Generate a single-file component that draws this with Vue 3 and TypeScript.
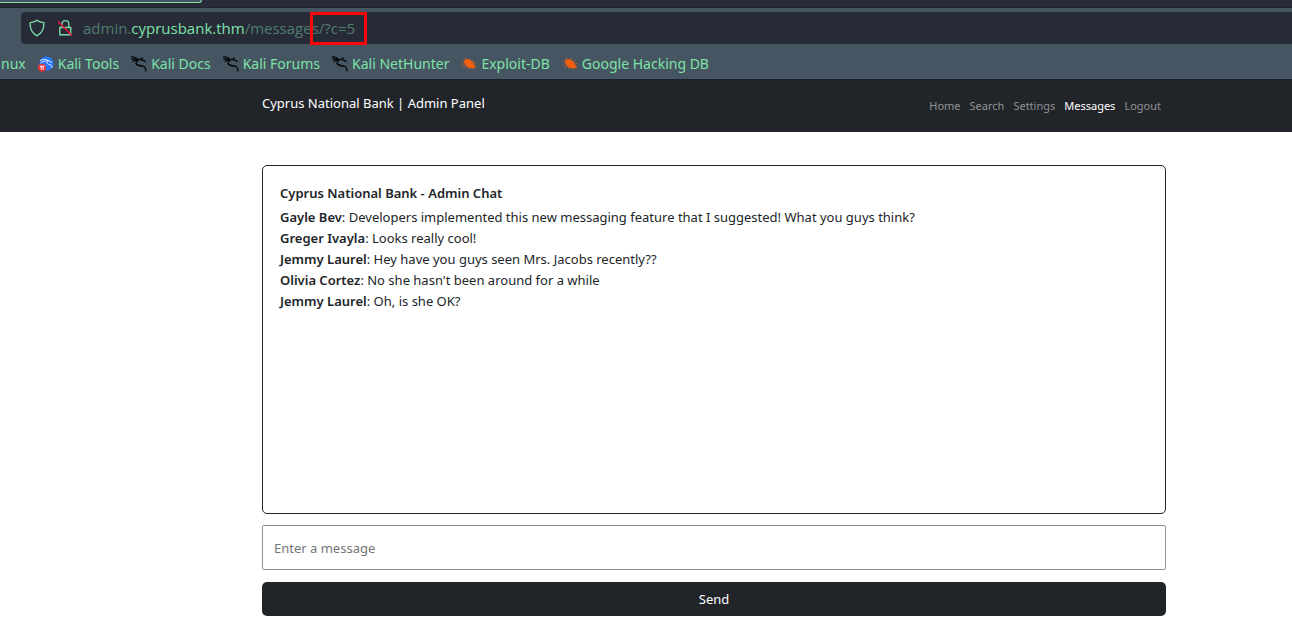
<script setup lang="ts">
import { ref } from 'vue'

interface Bookmark {
  label: string
  icon: 'tools' | 'dragon' | 'bug' | null
}
interface NavItem {
  label: string
  active?: boolean
}
interface Message {
  author: string
  text: string
}

const bookmarks: Bookmark[] = [
  { label: 'nux', icon: null },
  { label: 'Kali Tools', icon: 'tools' },
  { label: 'Kali Docs', icon: 'dragon' },
  { label: 'Kali Forums', icon: 'dragon' },
  { label: 'Kali NetHunter', icon: 'dragon' },
  { label: 'Exploit-DB', icon: 'bug' },
  { label: 'Google Hacking DB', icon: 'bug' },
]
const navItems: NavItem[] = [
  { label: 'Home' },
  { label: 'Search' },
  { label: 'Settings' },
  { label: 'Messages', active: true },
  { label: 'Logout' },
]
const messages: Message[] = [
  { author: 'Gayle Bev', text: 'Developers implemented this new messaging feature that I suggested! What you guys think?' },
  { author: 'Greger Ivayla', text: 'Looks really cool!' },
  { author: 'Jemmy Laurel', text: 'Hey have you guys seen Mrs. Jacobs recently??' },
  { author: 'Olivia Cortez', text: "No she hasn't been around for a while" },
  { author: 'Jemmy Laurel', text: 'Oh, is she OK?' },
]
const draft = ref('')
</script>

<template>
  <div class="screen">
    <div class="tabstrip"><div class="tab"></div></div>
    <div class="toolbar">
      <div class="urlbar">
        <svg class="shield" viewBox="0 0 16 18" aria-hidden="true">
          <path d="M8 1.2 C6.3 2.8 4 3.5 1.2 3.6 C.8 9.7 2.8 14 8 16.8 C13.2 14 15.2 9.7 14.8 3.6 C12 3.5 9.7 2.8 8 1.2Z" />
        </svg>
        <svg class="lock" viewBox="0 0 16 18" aria-hidden="true">
          <path d="M5 8V5a3.4 3.4 0 0 1 6.8 0v3M2.8 8.5h10.9v7.2H2.8z" />
          <path class="slash" d="M1 2.5 14.8 16.5" />
        </svg>
        <div class="address">
          <span>admin.</span><span class="domain">cyprusbank.thm</span><span>/messages</span><span class="query">/?c=5<i class="marker"></i></span>
        </div>
      </div>
    </div>
    <nav class="bookmarks" aria-label="Bookmarks">
      <a v-for="b in bookmarks" :key="b.label" href="#">
        <svg v-if="b.icon === 'tools'" viewBox="0 0 16 16" aria-hidden="true">
          <circle cx="8.5" cy="7.5" r="7" fill="#2777ff" />
          <path d="M2 4.6 C5 3.1 8 3 10.5 4.6 M2.5 7 C5 5.2 7.5 4.6 10.2 5 M10.2 5 C8 6.8 9.2 8.2 11.8 8.6 Q14 9 14.2 11.8 M10 4.6 13.8 6.4" fill="none" stroke="#dce9ff" stroke-width="1" />
          <circle cx="4" cy="11.7" r="4" fill="#e8303a" />
          <path d="M1.8 10.2h4.6M3.2 10.2v3.6M5.1 10.2v3.6" fill="none" stroke="#fff" stroke-width="1" />
        </svg>
        <svg v-else-if="b.icon === 'dragon'" viewBox="0 0 16 16" aria-hidden="true">
          <path d="M0 .6 C3 .9 5.2 1.7 6.8 3.2 M.4 3.2 C3 2.8 5 3.2 7 3.8 M1.6 5.6 C3.6 4.3 5.4 4 7.4 4.2 M7.2 3.8 C9.2 3.6 10.6 3 11.8 1.8 M10 4 12.6 4.4 14.5 5.9 M7.5 4.2 C5 5.3 4.3 7.2 6 8.6 C8.4 10.1 11.6 9.1 13.4 10.7 C14.6 11.9 15 13.6 14.8 15.4" fill="none" stroke="#080b0e" stroke-width="1.4" />
          <path d="M5 6 C5.6 9 10 8.7 13.4 10.6 C10.4 11 4 10.6 5 6Z" fill="#080b0e" />
        </svg>
        <svg v-else-if="b.icon === 'bug'" viewBox="0 0 16 16" aria-hidden="true">
          <path d="M4.4 3.2 L7 3 C9.8 3.4 12.4 5.8 13.4 9 L15 11.4 12 12.4 C8.6 13 5 11.2 3.4 7.6 L3 4.8Z" fill="#f2600f" />
          <path d="M5 3.4 4.4 1.4M8.2 3.5 10 2.2M10.5 5.5 13.4 5M12.2 8 15.4 7.4M3.2 5.5 .4 4.7M3.6 8 .8 8.4M5.4 10 2.4 11.8M8 11.8 6 13.4M13.4 10.4 15.8 10.6" fill="none" stroke="#a85f3c" stroke-width=".9" />
        </svg>
        <span>{{ b.label }}</span>
      </a>
    </nav>

    <header class="site-header">
      <a class="brand" href="#">Cyprus National Bank | Admin Panel</a>
      <nav class="menu" aria-label="Main">
        <a v-for="n in navItems" :key="n.label" href="#" :class="{ active: n.active }">{{ n.label }}</a>
      </nav>
    </header>

    <main class="content">
      <section class="chat">
        <h1>Cyprus National Bank - Admin Chat</h1>
        <p v-for="(m, i) in messages" :key="i"><strong>{{ m.author }}</strong>: {{ m.text }}</p>
      </section>
      <form class="composer" @submit.prevent>
        <input v-model="draft" type="text" placeholder="Enter a message" aria-label="Enter a message" />
        <button type="submit">Send</button>
      </form>
    </main>
  </div>
</template>

<style>
body {
  background: #fff;
}
</style>

<style scoped>
* {
  box-sizing: border-box;
}
.screen {
  font-family: "Noto Sans", sans-serif;
  font-size: 13px;
  line-height: 21px;
  color: #212529;
  overflow: hidden;
}
a {
  color: inherit;
  text-decoration: none;
  white-space: nowrap;
}
.tabstrip {
  height: 8px;
  background: #272a37;
  border-bottom: 1px solid #202430;
}
.tab {
  width: 202px;
  height: 3px;
  background: #455561;
  border-right: 1px solid #7ee2a8;
  border-bottom: 1px solid #7ee2a8;
  border-bottom-right-radius: 3px;
}
.toolbar {
  background: #455561;
  padding: 4px 0 4px 21px;
}
.urlbar {
  display: flex;
  align-items: center;
  height: 32px;
  padding-left: 8px;
  background: #272a37;
  border-radius: 4px 0 0 4px;
}
.urlbar svg {
  width: 16px;
  height: 18px;
  flex: none;
  fill: none;
  stroke: #7bdba4;
  stroke-width: 1.4;
}
.urlbar .lock {
  margin-left: 12px;
}
.urlbar .slash {
  stroke: #e5153f;
  stroke-width: 1.6;
}
.address {
  display: flex;
  margin-left: 10px;
  font-family: "Open Sans", "Noto Sans", sans-serif;
  font-size: 15px;
  color: #4f7d6b;
}
.domain {
  color: #7ee2a8;
}
.query {
  position: relative;
}
.marker {
  position: absolute;
  inset: -6px -12px -6px -9px;
  border: 3px solid #f60606;
}
.bookmarks {
  display: flex;
  gap: 12px;
  height: 32px;
  padding: 5px 0 0 1px;
  font-size: 14px;
  color: #7ee2a8;
  background: #455561;
  border-bottom: 1px solid #1b1e26;
}
.bookmarks a {
  display: flex;
  align-items: center;
  gap: 4px;
  height: 21px;
}
.bookmarks svg {
  width: 16px;
  height: 16px;
  flex: none;
}
.site-header {
  display: flex;
  justify-content: space-between;
  height: 52px;
  padding: 13px 131px 0 262px;
  background: #212529;
}
.brand {
  color: #fff;
}
.menu {
  display: flex;
  gap: 9px;
  padding-top: 2px;
  font-size: 11px;
  color: #909294;
}
.menu .active {
  color: #fff;
}
.content {
  padding: 33px 126px 9px 262px;
}
.chat {
  min-height: 349px;
  padding: 17px;
  border: 1px solid #212529;
  border-radius: 5px;
}
h1 {
  margin: 0 0 3px;
  font-size: 13px;
  line-height: 21px;
  font-weight: 600;
}
p {
  margin: 0;
}
strong {
  font-weight: 600;
}
.composer {
  display: flex;
  flex-direction: column;
  gap: 12px;
  margin-top: 11px;
}
input {
  height: 45px;
  padding: 0 11px;
  font: inherit;
  color: #212529;
  background: #fff;
  border: 1px solid #8f8f9d;
  border-radius: 2px;
}
input::placeholder {
  color: #757575;
  opacity: 1;
}
button {
  height: 34px;
  font: inherit;
  color: #fff;
  background: #212529;
  border: 0;
  border-radius: 5px;
}
</style>
